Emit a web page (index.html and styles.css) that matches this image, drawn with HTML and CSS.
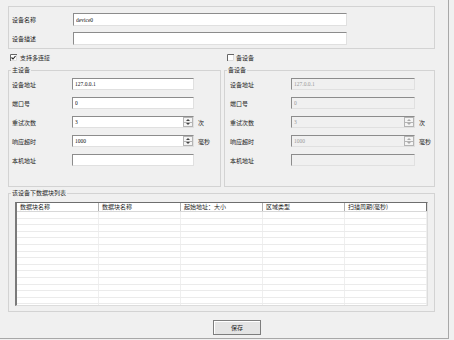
FILE: index.html
```html
<!DOCTYPE html>
<html lang="zh">
<head>
    <meta charset="utf-8">
    <title>设备属性</title>
    <link rel="stylesheet" href="styles.css">
</head>
<body>
    <div class="window">
        <div class="group top-group">
            <label>设备名称</label>
            <input class="field" value="device0">
            <label>设备描述</label>
            <input class="field" value="">
        </div>

        <div class="check-row">
            <label class="check">
                <svg width="7" height="7" viewBox="0 0 7 7">
                    <rect x="0" y="0" width="7" height="7" fill="#fff"/>
                    <path d="M0.5 7V0.5H7" fill="none" stroke="#666" stroke-width="1"/>
                    <path d="M6.5 1V6.5H1" fill="none" stroke="#ddd" stroke-width="1"/>
                    <path d="M1.5 3.5L3 5L5.5 2" fill="none" stroke="#222" stroke-width="1.1"/>
                </svg>
                支持多连接
            </label>
            <label class="check right">
                <svg width="7" height="7" viewBox="0 0 7 7">
                    <rect x="0" y="0" width="7" height="7" fill="#fff"/>
                    <path d="M0.5 7V0.5H7" fill="none" stroke="#666" stroke-width="1"/>
                    <path d="M6.5 1V6.5H1" fill="none" stroke="#ddd" stroke-width="1"/>
                </svg>
                备设备
            </label>
        </div>

        <div class="groups">
            <div class="group dev-group">
                <div class="legend">主设备</div>
                <div class="form">
                    <label>设备地址</label>
                    <input class="field" value="127.0.0.1">
                    <span></span>

                    <label>端口号</label>
                    <input class="field" value="0">
                    <span></span>

                    <label>重试次数</label>
                    <div class="field spin-field">
                        <input value="3">
                        <div class="spin"><i class="up"></i><i class="down"></i></div>
                    </div>
                    <span class="unit">次</span>

                    <label>响应超时</label>
                    <div class="field spin-field">
                        <input value="1000">
                        <div class="spin"><i class="up"></i><i class="down"></i></div>
                    </div>
                    <span class="unit">毫秒</span>

                    <label>本机地址</label>
                    <input class="field" value="">
                    <span></span>
                </div>
            </div>

            <div class="group dev-group backup">
                <div class="legend">备设备</div>
                <div class="form">
                    <label>设备地址</label>
                    <input class="field" value="127.0.0.1" disabled>
                    <span></span>

                    <label>端口号</label>
                    <input class="field" value="0" disabled>
                    <span></span>

                    <label>重试次数</label>
                    <div class="field spin-field off">
                        <input value="3" disabled>
                        <div class="spin"><i class="up"></i><i class="down"></i></div>
                    </div>
                    <span class="unit">次</span>

                    <label>响应超时</label>
                    <div class="field spin-field off">
                        <input value="1000" disabled>
                        <div class="spin"><i class="up"></i><i class="down"></i></div>
                    </div>
                    <span class="unit">毫秒</span>

                    <label>本机地址</label>
                    <input class="field" value="" disabled>
                    <span></span>
                </div>
            </div>
        </div>

        <div class="group list-group">
            <div class="legend">该设备下数据块列表</div>
            <div class="list">
                <div class="list-head">
                    <span>数据块名称</span>
                    <span>数据块名称</span>
                    <span>起始地址：大小</span>
                    <span>区域类型</span>
                    <span>扫描周期(毫秒)</span>
                </div>
                <div class="list-body"></div>
            </div>
        </div>

        <button class="save">保存</button>
    </div>
</body>
</html>
```

FILE: styles.css
```css
*{
    box-sizing: border-box;
}
body{
    margin: 0;
    background-color: #f0f0f0;
    font-family: "Noto Sans CJK SC", "Noto Sans", sans-serif;
    font-size: 6px;
    color: #1e1e1e;
}
.window{
    width: 449px;
    height: 339px;
    padding: 6px 0 0 8px;
    border-right: 1px solid #a8a8a8;
    border-bottom: 1px solid #a8a8a8;
    display: flex;
    flex-direction: column;
}
.group{
    border: 1px solid #d3d3d3;
}
.legend{
    width: fit-content;
    margin: -5px 0 0 -1px;
    padding: 0 1px;
    line-height: 8px;
    background-color: #f0f0f0;
}
.field{
    height: 12px;
    padding: 0 0 0 2px;
    border-top: 1px solid #8c8c8c;
    border-left: 1px solid #8c8c8c;
    border-right: 1px solid #e0e0e0;
    border-bottom: 1px solid #e0e0e0;
    background-color: #ffffff;
    font-family: "Liberation Serif", serif;
    font-size: 5.5px;
    color: #111;
    outline: none;
}
.field:disabled,
.spin-field.off{
    background-color: #f0f0f0;
    color: #999;
}
label{
    white-space: nowrap;
}

/* top */
.top-group{
    width: 427px;
    height: 43px;
    padding: 6px 0 0 3px;
    display: grid;
    grid-template-columns: 61px 274px;
    grid-auto-rows: 13px;
    row-gap: 6px;
    align-items: center;
}
.top-group .field{
    height: 13px;
    width: 274px;
}

/* checkboxes */
.check-row{
    height: 8px;
    margin-top: 4px;
    display: flex;
    align-items: center;
}
.check{
    display: flex;
    align-items: center;
    gap: 3px;
    width: 216px;
    padding-left: 2px;
}
.check.right{
    padding-left: 3px;
    gap: 2px;
}
.check svg{
    display: block;
}

/* device groups */
.groups{
    display: flex;
    gap: 3px;
    margin-top: 9px;
}
.dev-group{
    width: 213px;
    height: 117px;
    padding-left: 3px;
}
.dev-group.backup{
    width: 211px;
    padding-left: 5px;
}
.backup .legend{
    margin-left: -3px;
}
.form{
    margin-top: 4px;
    display: grid;
    grid-template-columns: 60px 122px auto;
    grid-auto-rows: 12px;
    row-gap: 7px;
    align-items: center;
}
.backup .form{
    grid-template-columns: 61px 124px auto;
}
.form .field{
    width: 100%;
}
.unit{
    margin-left: 4px;
}
.spin-field{
    display: flex;
    padding: 0;
}
.spin-field input{
    flex: 1;
    min-width: 0;
    border: none;
    padding: 0 0 0 2px;
    background: transparent;
    font: inherit;
    color: inherit;
    outline: none;
}
.spin{
    width: 10px;
    display: flex;
    flex-direction: column;
}
.spin i{
    flex: 1;
    display: flex;
    align-items: center;
    justify-content: center;
    border: 1px solid #b4b4b4;
    background-color: #f4f4f4;
}
.spin i + i{
    border-top: none;
}
.spin i::after{
    content: "";
    border-left: 2px solid transparent;
    border-right: 2px solid transparent;
}
.spin .up::after{
    border-bottom: 2px solid #444;
}
.spin .down::after{
    border-top: 2px solid #444;
}
.off .spin i::after{
    border-bottom-color: #aaa;
    border-top-color: #aaa;
}
.off .spin .up::after{
    border-top: none;
}
.off .spin .down::after{
    border-bottom: none;
}

/* data block list */
.list-group{
    width: 427px;
    height: 119px;
    margin-top: 6px;
    padding-left: 6px;
}
.list-group .legend{
    margin-left: -4px;
}
.list{
    width: 413px;
    height: 104px;
    margin-top: 5px;
    border-top: 1px solid #6e6e6e;
    border-left: 2px solid #7a7a7a;
    border-right: 1px solid #dcdcdc;
    border-bottom: 1px solid #dcdcdc;
    display: flex;
    flex-direction: column;
    background-color: #ffffff;
}
.list-head{
    display: flex;
    height: 9px;
    border-bottom: 1px solid #d8d8d8;
}
.list-head span{
    width: 82px;
    padding-left: 3px;
    line-height: 8px;
    border-right: 1px solid #b0b0b0;
    white-space: nowrap;
    overflow: hidden;
}
.list-head span:last-child{
    border-right-color: #6e6e6e;
}
.list-body{
    flex: 1;
    background-image:
        repeating-linear-gradient(to bottom, transparent 0 5.6px, #ebebeb 5.6px 6.6px),
        repeating-linear-gradient(to right, transparent 0 81px, #efefef 81px 82px);
}

/* save */
.save{
    width: 48px;
    height: 15px;
    margin: 8px 0 0 205px;
    padding: 0;
    border: 1px solid #7d7d7d;
    box-shadow: inset 1px 1px #ffffff;
    background-color: #e4e4e4;
    font-family: "Noto Sans CJK SC", sans-serif;
    font-size: 6px;
    color: #1e1e1e;
}
```
